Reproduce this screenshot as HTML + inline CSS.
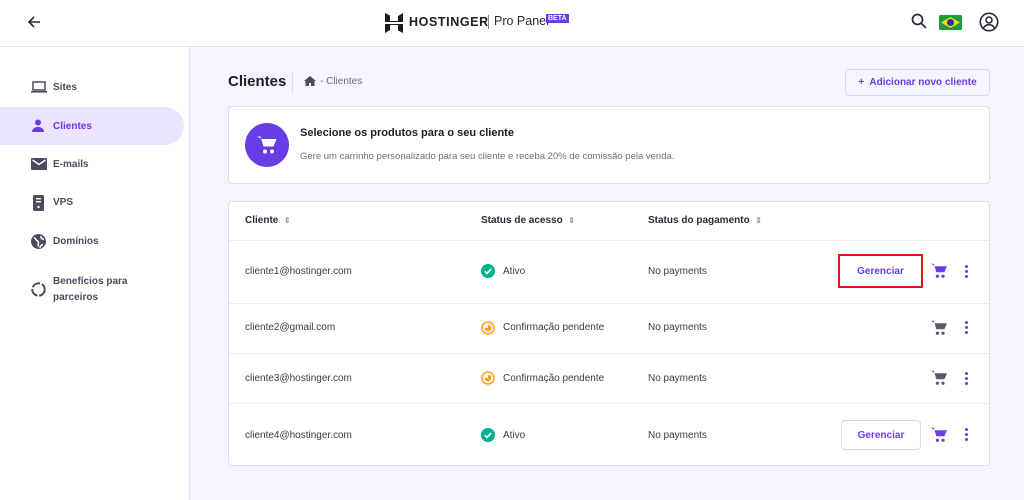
<!DOCTYPE html>
<html><head><meta charset="utf-8"><style>
*{box-sizing:border-box;margin:0;padding:0}
body{width:1024px;height:500px;overflow:hidden;font-family:"Liberation Sans",sans-serif;background:#f4f5ff;position:relative;color:#2f1c6a}
.abs{position:absolute;white-space:nowrap}
.hdr{left:0;top:0;width:1024px;height:47px;background:#fff;border-bottom:1px solid #e3e3ea}
.side{left:0;top:47px;width:190px;height:453px;background:#fff;border-right:1px solid #e3e3ea}
.nav{position:absolute;left:0;width:184px;height:38px;font-size:10px;font-weight:bold;color:#4b4b5c}
.nav span{position:absolute;left:53px}
.nav svg{position:absolute;left:31px}
.card{background:#fff;border:1px solid #dedee6;border-radius:4px}
.th{font-size:10px;font-weight:bold;color:#2a2a3a;top:215px}
.td{font-size:10px;color:#3b3b4a}
.line{left:229px;width:760px;height:1px;background:#ececf2}
.btn{font-size:10px;font-weight:bold;color:#673de6;background:#fff;border:1px solid #d8d8e0;border-radius:4px;display:flex;align-items:center;justify-content:center}
.dots{width:3px}
.dots i{display:block;width:3px;height:3px;border-radius:50%;background:#673de6;margin-bottom:2px}
</style></head><body>
<div class="abs hdr">
<svg class="abs" style="left:27px;top:15px" width="14" height="14" viewBox="0 0 14 14"><path d="M13 7H2M7 2L2 7l5 5" stroke="#2a2a3a" stroke-width="1.6" fill="none"/></svg>
<svg class="abs" style="left:385px;top:13px" width="18" height="20" viewBox="0 0 18 20"><path d="M0 0l5 2.5v5.5l8 0V3l5-3v9H0z M0 11h18v9l-5-2.5V12H5v5L0 20z" fill="#1d1e20"/></svg>
<div class="abs" style="left:409px;top:15px;font-size:12.5px;font-weight:bold;letter-spacing:0.6px;color:#1d1e20">HOSTINGER</div>
<div class="abs" style="left:488px;top:15px;width:1px;height:14px;background:#888"></div>
<div class="abs" style="left:494px;top:14px;font-size:12.5px;color:#2a2a3a">Pro Panel</div>
<div class="abs" style="left:546px;top:14px;background:#673de6;color:#fff;font-size:7px;font-weight:bold;padding:1px 2px">BETA</div>
<svg class="abs" style="left:911px;top:13px" width="16" height="17" viewBox="0 0 16 17"><circle cx="6.5" cy="6.5" r="5" stroke="#2a2a3a" stroke-width="1.7" fill="none"/><path d="M10 10l5 5" stroke="#2a2a3a" stroke-width="1.8"/></svg>
<svg class="abs" style="left:939px;top:15px" width="23" height="15" viewBox="0 0 23 15"><rect width="23" height="15" rx="1.5" fill="#1e9a3a"/><path d="M11.5 2L21 7.5 11.5 13 2 7.5z" fill="#f8d51b"/><circle cx="11.5" cy="7.5" r="3.5" fill="#1c3d8c"/></svg>
<svg class="abs" style="left:979px;top:12px" width="20" height="20" viewBox="0 0 20 20"><circle cx="10" cy="10" r="8.7" stroke="#2a2a3a" stroke-width="1.6" fill="none"/><circle cx="10" cy="8" r="3" stroke="#2a2a3a" stroke-width="1.6" fill="none"/><path d="M4.5 16c1.5-2.5 3.5-3.3 5.5-3.3s4 .8 5.5 3.3" stroke="#2a2a3a" stroke-width="1.6" fill="none"/></svg>
</div>
<div class="abs side">
<div class="nav" style="top:22px"><svg style="top:12px" width="16" height="13" viewBox="0 0 16 13"><rect x="2" y="1" width="12" height="8" stroke="#4b4b5c" stroke-width="1.5" fill="none"/><rect x="0" y="10" width="16" height="1.6" fill="#4b4b5c"/></svg><span style="top:13px">Sites</span></div>
<div class="nav" style="top:60px;background:#ebe4ff;border-radius:0 19px 19px 0;color:#673de6"><svg style="top:12px" width="14" height="13" viewBox="0 0 14 13"><circle cx="7" cy="3.5" r="3" fill="#673de6"/><path d="M1 13c0-3.5 3-5 6-5s6 1.5 6 5z" fill="#673de6"/></svg><span style="top:14px">Clientes</span></div>
<div class="nav" style="top:99px"><svg style="top:12px" width="16" height="13" viewBox="0 0 16 13"><rect width="16" height="12" rx="1" fill="#4b4b5c"/><path d="M1.5 2l6.5 4.5L14.5 2" stroke="#fff" stroke-width="1.4" fill="none"/></svg><span style="top:13px">E-mails</span></div>
<div class="nav" style="top:137px"><svg style="top:11px;left:33px" width="11" height="16" viewBox="0 0 11 16"><rect width="11" height="16" rx="1.5" fill="#4b4b5c"/><rect x="3" y="3" width="5" height="1.4" fill="#fff"/><rect x="3" y="6" width="5" height="1.4" fill="#fff"/><circle cx="5.5" cy="12" r="1.2" fill="#fff"/></svg><span style="top:13px">VPS</span></div>
<div class="nav" style="top:176px"><svg style="top:11px" width="15" height="15" viewBox="0 0 15 15"><circle cx="7.5" cy="7.5" r="7.5" fill="#4b4b5c"/><path d="M3 3.5c2 1 2 3 3.5 3.5s1 3 .5 5.5M10 2c-.5 2 1 3 3 3.5M9 14c0-2 1.5-3 3-3.5" stroke="#fff" stroke-width="1.5" fill="none"/></svg><span style="top:13px">Domínios</span></div>
<div class="nav" style="top:222px;height:40px"><svg style="top:13px" width="15" height="15" viewBox="0 0 15 15"><circle cx="7.5" cy="7.5" r="6.2" stroke="#4b4b5c" stroke-width="2" fill="none" stroke-dasharray="9 1.8"/></svg><span style="top:5px;line-height:16px">Benefícios para<br>parceiros</span></div>
</div>
<div class="abs" style="left:228px;top:73px;font-size:15px;font-weight:bold;color:#1d1e20">Clientes</div>
<div class="abs" style="left:292px;top:71px;width:1px;height:22px;background:#dedee6"></div>
<svg class="abs" style="left:304px;top:76px" width="12" height="10" viewBox="0 0 12 10"><path d="M6 0L0 5h1.5v5h3.5V7h2v3h3.5V5H12z" fill="#4b4b5c"/></svg>
<div class="abs" style="left:320px;top:76px;font-size:10px;color:#6d6d80">- Clientes</div>
<div class="abs btn" style="left:845px;top:69px;width:145px;height:27px;background:transparent">+&nbsp; Adicionar novo cliente</div>
<div class="abs card" style="left:228px;top:106px;width:762px;height:78px"></div>
<div class="abs" style="left:245px;top:123px;width:44px;height:44px;border-radius:50%;background:#673de6"></div>
<svg class="abs" style="left:257px;top:135px" width="20" height="20" viewBox="0 0 20 20"><path d="M0 1.5h3.5l3 10h10l3-7.5H5z" fill="#fff"/><circle cx="8" cy="16.5" r="2" fill="#fff"/><circle cx="15" cy="16.5" r="2" fill="#fff"/></svg>
<div class="abs" style="left:300px;top:127px;font-size:11px;font-weight:bold;color:#1d1e20">Selecione os produtos para o seu cliente</div>
<div class="abs" style="left:300px;top:151px;font-size:9.5px;color:#6d6d80">Gere um carrinho personalizado para seu cliente e receba 20% de comissão pela venda.</div>
<div class="abs card" style="left:228px;top:201px;width:762px;height:265px"></div>
<div class="abs th" style="left:245px">Cliente &nbsp;<span style="color:#999;font-size:8px">⇕</span></div>
<div class="abs th" style="left:481px">Status de acesso &nbsp;<span style="color:#999;font-size:8px">⇕</span></div>
<div class="abs th" style="left:648px">Status do pagamento &nbsp;<span style="color:#999;font-size:8px">⇕</span></div>
<div class="abs line" style="top:240px"></div>
<div class="abs line" style="top:303px"></div>
<div class="abs line" style="top:353px"></div>
<div class="abs line" style="top:403px"></div>

<div class="abs td" style="left:245px;top:266px">cliente1@hostinger.com</div>
<div class="abs td" style="left:245px;top:322px">cliente2@gmail.com</div>
<div class="abs td" style="left:245px;top:373px">cliente3@hostinger.com</div>
<div class="abs td" style="left:245px;top:430px">cliente4@hostinger.com</div>

<svg class="abs" style="left:481px;top:264px" width="14" height="14"><circle cx="7" cy="7" r="7" fill="#00b090"/><path d="M3.8 7.2l2.2 2.2 4.2-4.4" stroke="#fff" stroke-width="1.7" fill="none"/></svg>
<div class="abs td" style="left:503px;top:266px">Ativo</div>
<svg class="abs" style="left:481px;top:321px" width="14" height="14"><circle cx="7" cy="7" r="6" stroke="#ffa020" stroke-width="1.6" fill="none"/><path d="M7 3.5A3.5 3.5 0 1 1 3.5 7H7z" fill="#ffa020"/></svg>
<div class="abs td" style="left:503px;top:322px">Confirmação pendente</div>
<svg class="abs" style="left:481px;top:371px" width="14" height="14"><circle cx="7" cy="7" r="6" stroke="#ffa020" stroke-width="1.6" fill="none"/><path d="M7 3.5A3.5 3.5 0 1 1 3.5 7H7z" fill="#ffa020"/></svg>
<div class="abs td" style="left:503px;top:373px">Confirmação pendente</div>
<svg class="abs" style="left:481px;top:428px" width="14" height="14"><circle cx="7" cy="7" r="7" fill="#00b090"/><path d="M3.8 7.2l2.2 2.2 4.2-4.4" stroke="#fff" stroke-width="1.7" fill="none"/></svg>
<div class="abs td" style="left:503px;top:430px">Ativo</div>

<div class="abs td" style="left:648px;top:266px">No payments</div>
<div class="abs td" style="left:648px;top:322px">No payments</div>
<div class="abs td" style="left:648px;top:373px">No payments</div>
<div class="abs td" style="left:648px;top:430px">No payments</div>

<div class="abs btn" style="left:838px;top:254px;width:85px;height:34px;border:2px solid #e3141e;border-radius:0">Gerenciar</div>
<div class="abs btn" style="left:841px;top:420px;width:80px;height:30px">Gerenciar</div>

<svg class="abs" style="left:931px;top:263px" width="16" height="16" viewBox="0 0 20 20"><path d="M0 1h3.5l3.2 10.5h10L20 4H5z" fill="#673de6"/><circle cx="8" cy="16.5" r="2" fill="#673de6"/><circle cx="15" cy="16.5" r="2" fill="#673de6"/></svg>
<svg class="abs" style="left:931px;top:320px" width="16" height="16" viewBox="0 0 20 20"><path d="M0 1h3.5l3.2 10.5h10L20 4H5z" fill="#5a5a68"/><circle cx="8" cy="16.5" r="2" fill="#5a5a68"/><circle cx="15" cy="16.5" r="2" fill="#5a5a68"/></svg>
<svg class="abs" style="left:931px;top:370px" width="16" height="16" viewBox="0 0 20 20"><path d="M0 1h3.5l3.2 10.5h10L20 4H5z" fill="#5a5a68"/><circle cx="8" cy="16.5" r="2" fill="#5a5a68"/><circle cx="15" cy="16.5" r="2" fill="#5a5a68"/></svg>
<svg class="abs" style="left:931px;top:427px" width="16" height="16" viewBox="0 0 20 20"><path d="M0 1h3.5l3.2 10.5h10L20 4H5z" fill="#673de6"/><circle cx="8" cy="16.5" r="2" fill="#673de6"/><circle cx="15" cy="16.5" r="2" fill="#673de6"/></svg>

<div class="abs dots" style="left:965px;top:265px"><i></i><i></i><i></i></div>
<div class="abs dots" style="left:965px;top:321px"><i></i><i></i><i></i></div>
<div class="abs dots" style="left:965px;top:372px"><i></i><i></i><i></i></div>
<div class="abs dots" style="left:965px;top:428px"><i></i><i></i><i></i></div>
</body></html>
